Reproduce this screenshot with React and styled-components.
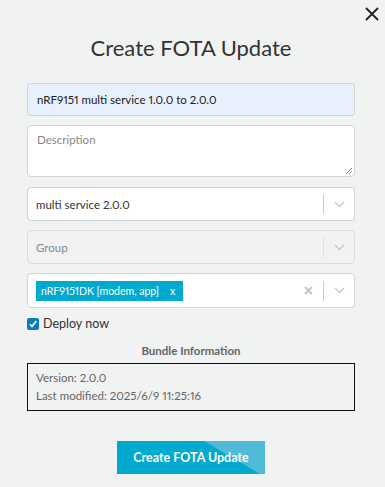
import React from "react";
import styled, { createGlobalStyle } from "styled-components";

const Global = createGlobalStyle`
  html, body {
    margin: 0;
    padding: 0;
    background: #f1f2f2;
    font-family: Lato, "Open Sans", sans-serif;
    font-variant-numeric: proportional-nums;
  }
`;

const Modal = styled.div`
  position: relative;
  width: 385px;
  height: 487px;
  box-sizing: border-box;
  padding: 32px 30px 0 27px;
  background: #f1f2f2;
`;

const Close = styled.button`
  position: absolute;
  top: 5px;
  right: 4px;
  width: 18px;
  height: 18px;
  padding: 0;
  border: none;
  background: none;
  cursor: pointer;
`;

const Title = styled.h1`
  margin: 0 0 19px;
  text-align: center;
  font-size: 22px;
  font-weight: 400;
  color: #333;
  line-height: 32px;
`;

const Form = styled.div`
  display: flex;
  flex-direction: column;
  gap: 9px;
`;

const TextInput = styled.div`
  height: 33px;
  box-sizing: border-box;
  border: 1px solid #d4d4d4;
  border-radius: 3px;
  background: #e8f0fe;
  padding: 0 9px;
  display: flex;
  align-items: center;
  font-size: 11.5px;
  color: #222;
`;

const TextArea = styled.div`
  position: relative;
  height: 52px;
  box-sizing: border-box;
  border: 1px solid #d4d4d4;
  border-radius: 4px;
  background: #fff;
  padding: 7px 9px;
  font-size: 11.5px;
  color: #888;
  margin-bottom: 1px;
`;

const Grip = styled.svg`
  position: absolute;
  right: 1px;
  bottom: 1px;
`;

const Select = styled.div`
  height: ${(p) => (p.$tall ? 35 : 34)}px;
  box-sizing: border-box;
  border: 1px solid ${(p) => (p.$disabled ? "#dcdcdc" : "#d4d4d4")};
  border-radius: 4px;
  background: ${(p) => (p.$disabled ? "#f2f2f2" : "#fff")};
  display: flex;
  align-items: center;
  padding-left: 8px;
`;

const Value = styled.div`
  flex: 1;
  font-size: 11.5px;
  color: ${(p) => (p.$muted ? "#888" : "#333")};
  display: flex;
  align-items: center;
`;

const Tag = styled.span`
  display: inline-flex;
  align-items: center;
  height: 20px;
  background: #00a9ce;
  color: #fff;
  font-size: 10.5px;
  padding: 0 8px 0 5px;
  gap: 11px;
`;

const Indicators = styled.div`
  display: flex;
  align-items: center;
  height: 100%;
`;

const Sep = styled.span`
  width: 1px;
  height: 20px;
  background: ${(p) => (p.$light ? "#e0e0e0" : "#cccccc")};
`;

const Icon = styled.span`
  width: 30px;
  display: flex;
  justify-content: center;
  align-items: center;
`;

const CheckRow = styled.label`
  display: flex;
  align-items: center;
  gap: 4px;
  font-size: 12.5px;
  color: #333;
  margin-top: -1px;
`;

const Box = styled.span`
  width: 12px;
  height: 12px;
  border-radius: 2px;
  background: #0a7bbf;
  display: flex;
  align-items: center;
  justify-content: center;
`;

const SectionTitle = styled.div`
  text-align: center;
  font-size: 11.5px;
  font-weight: 700;
  color: #666;
  margin-top: 4px;
`;

const Info = styled.div`
  border: 1px solid #111;
  padding: 5px 8px 5px;
  font-size: 11.5px;
  color: #666;
  line-height: 18px;
  margin-top: -3px;
`;

const Footer = styled.div`
  display: flex;
  justify-content: center;
  margin-top: 30px;
`;

const Button = styled.button`
  position: relative;
  overflow: hidden;
  width: 148px;
  height: 33px;
  border: none;
  color: #fff;
  font-family: inherit;
  font-size: 12.5px;
  font-weight: 700;
  background: #00a9ce;
  cursor: pointer;

  &::after {
    content: "";
    position: absolute;
    inset: 0;
    background: #4fbbd7;
    clip-path: polygon(87px 0, 148px 0, 148px 33px, 143px 33px);
  }

  span {
    position: relative;
    z-index: 1;
  }
`;

const Chevron = () => (
  <svg width="11" height="7" viewBox="0 0 11 7">
    <path d="M1 1l4.5 4.5L10 1" fill="none" stroke="#c8c8c8" strokeWidth="1.3" />
  </svg>
);

export default function App() {
  return (
    <>
      <Global />
      <Modal>
        <Close aria-label="close">
          <svg width="18" height="18" viewBox="0 0 18 18">
            <path d="M3 3l12 12M15 3L3 15" stroke="#222" strokeWidth="1.8" />
          </svg>
        </Close>
        <Title>Create FOTA Update</Title>
        <Form>
          <TextInput>nRF9151 multi service 1.0.0 to 2.0.0</TextInput>
          <TextArea>
            Description
            <Grip width="8" height="8" viewBox="0 0 8 8">
              <path d="M7 1L1 7M7 4L4 7" stroke="#777" strokeWidth="0.9" />
            </Grip>
          </TextArea>
          <Select>
            <Value>multi service 2.0.0</Value>
            <Indicators>
              <Sep />
              <Icon><Chevron /></Icon>
            </Indicators>
          </Select>
          <Select $disabled>
            <Value $muted>Group</Value>
            <Indicators>
              <Sep $light />
              <Icon><Chevron /></Icon>
            </Indicators>
          </Select>
          <Select $tall>
            <Value>
              <Tag>nRF9151DK [modem, app] <span>x</span></Tag>
            </Value>
            <Indicators>
              <Icon>
                <svg width="9" height="9" viewBox="0 0 9 9">
                  <path d="M1 1l7 7M8 1L1 8" stroke="#c4c4c4" strokeWidth="1.8" />
                </svg>
              </Icon>
              <Sep />
              <Icon><Chevron /></Icon>
            </Indicators>
          </Select>
          <CheckRow>
            <Box>
              <svg width="10" height="10" viewBox="0 0 10 10">
                <path d="M2 5.2l2 2.3L8.3 2" fill="none" stroke="#fff" strokeWidth="1.7" />
              </svg>
            </Box>
            Deploy now
          </CheckRow>
          <SectionTitle>Bundle Information</SectionTitle>
          <Info>
            <div>Version: 2.0.0</div>
            <div>Last modified: 2025/6/9 11:25:16</div>
          </Info>
        </Form>
        <Footer>
          <Button><span>Create FOTA Update</span></Button>
        </Footer>
      </Modal>
    </>
  );
}
